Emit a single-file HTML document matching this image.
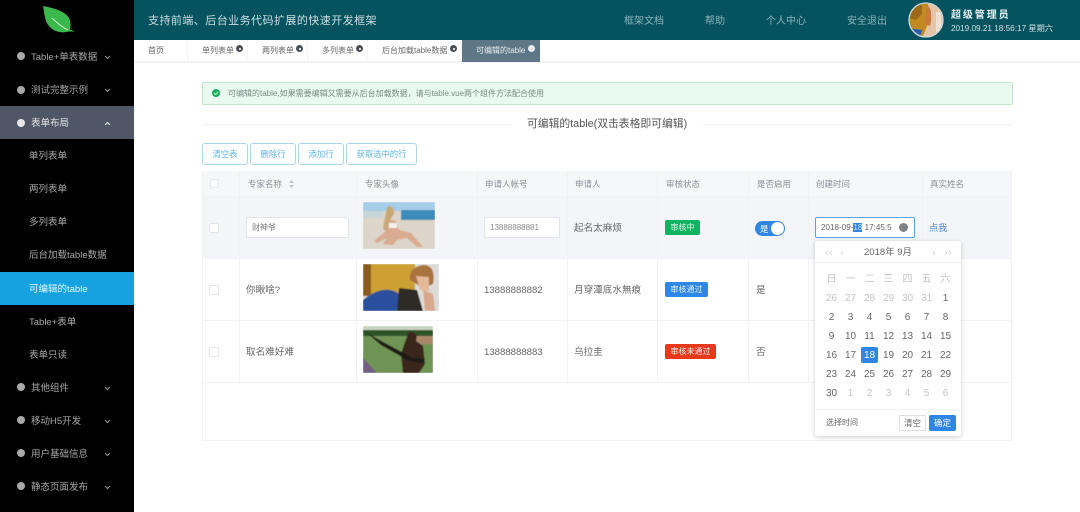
<!DOCTYPE html>
<html><head><meta charset="utf-8">
<style>
html,body{margin:0;padding:0;width:1080px;height:512px;overflow:hidden;background:#fff}
body{position:relative;font-family:"Liberation Sans","Noto Sans CJK SC",sans-serif;font-size:9.5px;color:#5f6368}
.a,.t{position:absolute}
.t{white-space:nowrap;line-height:14px}
.m{position:absolute;left:0;width:134px;height:33px;line-height:36px;color:#a8a8a8;white-space:nowrap}
.m .d{position:absolute;left:17px;top:13px;width:8px;height:8px;border-radius:50%;background:#a9a9a9}
.m .l{position:absolute;left:31px}
.m .s{position:absolute;left:29px}
.m svg{position:absolute;left:104px;top:15px}
.tab{position:absolute;top:40px;height:22px;line-height:22px;color:#666;font-size:8px;white-space:nowrap;border-right:1px solid #f5f5f5;box-sizing:border-box}
.x{position:absolute;width:7px;height:7px;border-radius:50%;background:#4a4f55;top:5px}
.x:after{content:"";position:absolute;left:2.5px;top:2.5px;width:2px;height:2px;background:#ddd}
.btn{position:absolute;top:143px;height:22px;line-height:20px;border:1px solid #a9d8ec;border-radius:3px;box-sizing:border-box;color:#62b6e8;text-align:center;font-size:8.3px;background:#fdfeff}
.hl{position:absolute;background:#f0f2f5}
.h{position:absolute;top:177px;line-height:14px;color:#8a8f96;font-size:8.5px;white-space:nowrap}
.c{position:absolute;line-height:14px;color:#666;font-size:9.6px;white-space:nowrap}
.cb{position:absolute;left:209px;width:10px;height:10px;border:1px solid #e4e6ea;border-radius:2px;background:#fff;box-sizing:border-box}
.in{position:absolute;background:#fff;border:1px solid #e2e5ea;border-radius:2px;box-sizing:border-box;height:21px;line-height:20px;font-size:8px;color:#777;padding-left:5px}
.tag{position:absolute;height:15px;line-height:16px;border-radius:2px;color:#e6f3ee;font-size:8px;text-align:center}
.cal span{position:absolute;width:19px;text-align:center;font-size:10px;line-height:14px;color:#666;margin-top:1px}
.cal span.g{color:#c3c5c9}
</style></head><body>

<!-- sidebar -->
<div class="a" style="left:0;top:0;width:134px;height:512px;background:#000"></div>
<svg class="a" style="left:40px;top:4px" width="38" height="30" viewBox="0 0 38 30">
<path d="M3 2 C13 4 26 7 29.5 15 C31 19 30.5 23 30 25.5 L35 27.5 L28.5 27.5 C20 30 10 27 6 17 C4 11 4 6 3 2Z" fill="#3bb84b"/>
<path d="M12 14 C17 19 22 23 28 26" stroke="#d7f0d4" stroke-width=".9" fill="none"/>
</svg>

<div class="m" style="top:40px"><i class="d" style="top:12px"></i><span class="l">Table+单表数据</span><svg width="7" height="5" viewBox="0 0 7 5"><path d="M1 1l2.5 2.5L6 1" fill="none" stroke="#999" stroke-width="1"/></svg></div>
<div class="m" style="top:73px"><i class="d"></i><span class="l">测试完整示例</span><svg width="7" height="5" viewBox="0 0 7 5"><path d="M1 1l2.5 2.5L6 1" fill="none" stroke="#999" stroke-width="1"/></svg></div>
<div class="m" style="top:106px;background:#4f5666;color:#e4e5e8"><i class="d" style="background:#e8e8e8"></i><span class="l">表单布局</span><svg width="7" height="5" viewBox="0 0 7 5"><path d="M1 4l2.5-2.5L6 4" fill="none" stroke="#e8e8e8" stroke-width="1"/></svg></div>
<div class="m" style="top:139px"><span class="s">单列表单</span></div>
<div class="m" style="top:172px"><span class="s">两列表单</span></div>
<div class="m" style="top:205px"><span class="s">多列表单</span></div>
<div class="m" style="top:238px"><span class="s">后台加载table数据</span></div>
<div class="m" style="top:272px;background:#16a2e0;color:#e8f6fd"><span class="s">可编辑的table</span></div>
<div class="m" style="top:305px"><span class="s">Table+表单</span></div>
<div class="m" style="top:338px"><span class="s">表单只读</span></div>
<div class="m" style="top:371px"><i class="d" style="top:12px"></i><span class="l">其他组件</span><svg width="7" height="5" viewBox="0 0 7 5"><path d="M1 1l2.5 2.5L6 1" fill="none" stroke="#999" stroke-width="1"/></svg></div>
<div class="m" style="top:404px"><i class="d" style="top:12px"></i><span class="l">移动H5开发</span><svg width="7" height="5" viewBox="0 0 7 5"><path d="M1 1l2.5 2.5L6 1" fill="none" stroke="#999" stroke-width="1"/></svg></div>
<div class="m" style="top:437px"><i class="d" style="top:12px"></i><span class="l">用户基础信息</span><svg width="7" height="5" viewBox="0 0 7 5"><path d="M1 1l2.5 2.5L6 1" fill="none" stroke="#999" stroke-width="1"/></svg></div>
<div class="m" style="top:470px"><i class="d" style="top:12px"></i><span class="l">静态页面发布</span><svg width="7" height="5" viewBox="0 0 7 5"><path d="M1 1l2.5 2.5L6 1" fill="none" stroke="#999" stroke-width="1"/></svg></div>

<!-- header -->
<div class="a" style="left:134px;top:0;width:946px;height:40px;background:#04535f"></div>
<div class="t" style="left:148px;top:14px;font-size:11px;letter-spacing:.45px;color:#cfdfe1">支持前端、后台业务代码扩展的快速开发框架</div>
<div class="t" style="left:624px;top:15px;font-size:10px;color:#8fb3b8">框架文档</div>
<div class="t" style="left:705px;top:15px;font-size:10px;color:#8fb3b8">帮助</div>
<div class="t" style="left:766px;top:15px;font-size:10px;color:#8fb3b8">个人中心</div>
<div class="t" style="left:847px;top:15px;font-size:10px;color:#8fb3b8">安全退出</div>
<svg class="a" style="left:908px;top:2px" width="36" height="36" viewBox="0 0 36 36">
<defs><clipPath id="av"><circle cx="18" cy="18" r="16.5"/></clipPath></defs>
<g clip-path="url(#av)"><rect width="36" height="36" fill="#c28a22"/><path d="M0 0H14V12L8 18L0 16Z" fill="#9c6a18"/><path d="M0 26L14 28L12 36L0 36Z" fill="#2a5ea8"/><path d="M20 2L36 2L36 36L14 36L20 22Z" fill="#e6c4a8"/><path d="M19 3C24 6 24 16 22 24L17 22Z" fill="#c9793c"/><path d="M28 10L33 10L34 30L28 30Z" fill="#f0dfd4"/></g>
<circle cx="18" cy="18" r="17" fill="none" stroke="#d5dcdc" stroke-width="1.3"/>
</svg>
<div class="t" style="left:951px;top:9px;font-size:10px;font-weight:bold;letter-spacing:1.9px;color:#e4eeef">超级管理员</div>
<div class="t" style="left:951px;top:22px;font-size:8.2px;color:#cfe0e2">2019.09.21 18:56:17 星期六</div>

<!-- tabs -->
<div class="a" style="left:134px;top:61px;width:946px;height:2px;background:#f2f2f2"></div>
<div class="tab" style="left:134px;width:54px;padding-left:14px">首页</div>
<div class="tab" style="left:188px;width:60px;padding-left:14px">单列表单<i class="x" style="left:48px"></i></div>
<div class="tab" style="left:248px;width:60px;padding-left:14px">两列表单<i class="x" style="left:48px"></i></div>
<div class="tab" style="left:308px;width:60px;padding-left:14px">多列表单<i class="x" style="left:48px"></i></div>
<div class="tab" style="left:368px;width:94px;padding-left:14px">后台加载table数据<i class="x" style="left:82px"></i></div>
<div class="tab" style="left:462px;width:78px;padding-left:14px;background:#5d7787;color:#e8eef1;border:0;height:22px">可编辑的table<i class="x" style="left:66px;background:#e8eef1"></i></div>

<!-- alert -->
<div class="a" style="left:202px;top:82px;width:811px;height:23px;background:#e9fbf0;border:1px solid #bfe8cd;border-radius:2px;box-sizing:border-box"></div>
<svg class="a" style="left:212px;top:89px" width="8" height="8" viewBox="0 0 8 8"><circle cx="4" cy="4" r="4" fill="#1aae5c"/><path d="M2 4l1.5 1.5L6 3" fill="none" stroke="#d8f5e4" stroke-width=".9"/></svg>
<div class="t" style="left:228px;top:87px;font-size:8px;color:#7c8a84">可编辑的table,如果需要编辑又需要从后台加载数据，请与table.vue两个组件方法配合使用</div>

<!-- divider -->
<div class="hl" style="left:202px;top:124px;width:310px;height:1px"></div>
<div class="hl" style="left:703px;top:124px;width:309px;height:1px"></div>
<div class="t" style="left:527px;top:117px;font-size:10.8px;color:#555">可编辑的table(双击表格即可编辑)</div>

<!-- buttons -->
<div class="btn" style="left:202px;width:46px">清空表</div>
<div class="btn" style="left:250px;width:46px">删除行</div>
<div class="btn" style="left:298px;width:46px">添加行</div>
<div class="btn" style="left:346px;width:71px">获取选中的行</div>

<!-- table -->
<div class="a" style="left:202px;top:171px;width:810px;height:25px;background:#f6f7f8"></div>
<div class="a" style="left:202px;top:196px;width:810px;height:62px;background:#f3f5f8"></div>
<div class="a" style="left:202px;top:171px;width:810px;height:270px;border:1px solid #f0f2f5;box-sizing:border-box;border-top:0"></div>
<div class="hl" style="left:202px;top:196px;width:810px;height:1px"></div>
<div class="hl" style="left:202px;top:258px;width:810px;height:1px"></div>
<div class="hl" style="left:202px;top:320px;width:810px;height:1px"></div>
<div class="hl" style="left:202px;top:382px;width:810px;height:1px"></div>
<div class="hl" style="left:239px;top:171px;width:1px;height:211px"></div>
<div class="hl" style="left:356px;top:171px;width:1px;height:211px"></div>
<div class="hl" style="left:477px;top:171px;width:1px;height:211px"></div>
<div class="hl" style="left:567px;top:171px;width:1px;height:211px"></div>
<div class="hl" style="left:657px;top:171px;width:1px;height:211px"></div>
<div class="hl" style="left:748px;top:171px;width:1px;height:211px"></div>
<div class="hl" style="left:808px;top:171px;width:1px;height:211px"></div>
<div class="hl" style="left:922px;top:171px;width:1px;height:211px"></div>

<div class="cb" style="top:179px;left:210px;width:9px;height:9px"></div>
<div class="cb" style="top:223px"></div>
<div class="cb" style="top:285px"></div>
<div class="cb" style="top:347px"></div>

<div class="h" style="left:248px">专家名称</div>
<svg class="a" style="left:288px;top:179px" width="7" height="10" viewBox="0 0 7 10"><path d="M3.5 1L6 4H1ZM3.5 9L1 6H6Z" fill="#c0c4cc"/></svg>
<div class="h" style="left:365px">专家头像</div>
<div class="h" style="left:485px">申请人帐号</div>
<div class="h" style="left:575px">申请人</div>
<div class="h" style="left:666px">审核状态</div>
<div class="h" style="left:757px">是否启用</div>
<div class="h" style="left:816px">创建时间</div>
<div class="h" style="left:930px">真实姓名</div>

<!-- row 1 -->
<div class="in" style="left:246px;top:217px;width:103px">财神爷</div>
<svg class="a" style="left:363px;top:202px" width="72" height="47" viewBox="0 0 72 47">
<defs><filter id="b"><feGaussianBlur stdDeviation=".6"/></filter></defs>
<g filter="url(#b)"><rect width="72" height="47" fill="#dcd5c9"/><rect width="72" height="9" fill="#a6cde8"/><rect y="8" x="38" width="34" height="10" fill="#3a8cba"/><rect y="9" width="20" height="7" fill="#c7d6d8"/>
<path d="M26 17L33 19L36 28L48 31L60 45L54 45L44 36L34 38L30 43L20 42L24 36L14 41L11 39L23 29Z" fill="#d9ab90"/><path d="M24 5C29 2 32 7 31 12L27 18L23 30L20 26Z" fill="#c9a878"/><rect x="26" y="21" width="8" height="5" fill="#f4f1ec"/></g></svg>

<div class="in" style="left:484px;top:217px;width:76px;padding-left:5px;color:#888">13888888881</div>
<div class="c" style="left:574px;top:222px">起名太麻烦</div>
<div class="tag" style="left:665px;top:220px;width:35px;background:#12b461">审核中</div>
<div class="a" style="left:755px;top:221px;width:30px;height:15px;border-radius:8px;background:#2f86e4"></div>
<div class="a" style="left:771px;top:222px;width:13px;height:13px;border-radius:50%;background:#fff"></div>
<div class="t" style="left:760px;top:222px;font-size:8.5px;color:#fff">是</div>

<div class="a" style="left:815px;top:217px;width:100px;height:21px;background:#fff;border:1px solid #5b9fe6;border-radius:2px;box-sizing:border-box"></div>
<div class="t" style="left:821px;top:221px;font-size:8.1px;color:#666">2018-09-<span style="background:#2f86e4;color:#cfe4fa">18</span> 17:45:5</div>
<div class="a" style="left:899px;top:223px;width:9px;height:9px;border-radius:50%;background:#808489"></div>
<div class="c" style="left:929px;top:221px;font-size:9.2px;color:#4a86d6">点我</div>

<!-- row 2 -->
<div class="c" style="left:246px;top:284px">你瞅啥?</div>
<svg class="a" style="left:363px;top:264px" width="76" height="47" viewBox="0 0 76 47">
<g filter="url(#b)"><rect width="76" height="47" fill="#dcdbd7"/><rect width="52" height="32" fill="#cda035"/><path d="M0 0H8V32H0Z" fill="#8a5c1e"/><path d="M0 47V36C12 26 26 22 36 30L34 47Z" fill="#2a4f9c"/><path d="M36 24L54 26L60 47H34Z" fill="#2e2a28"/>
<path d="M47 16C45 6 54 1 62 1C69 2 72 8 70 20L60 24Z" fill="#a9733e"/><path d="M53 12L66 13L66 27L57 26Z" fill="#e6b89a"/><path d="M60 26L70 30L72 47L62 47Z" fill="#d9a88c"/></g></svg>
<div class="c" style="left:484px;top:284px">13888888882</div>
<div class="c" style="left:574px;top:284px">月穿潭底水無痕</div>
<div class="tag" style="left:665px;top:282px;width:43px;background:#2f86e4">审核通过</div>
<div class="c" style="left:756px;top:284px">是</div>

<!-- row 3 -->
<div class="c" style="left:246px;top:346px">取名难好难</div>
<svg class="a" style="left:363px;top:326px" width="70" height="47" viewBox="0 0 70 47">
<g filter="url(#b)"><rect width="70" height="47" fill="#6f9455"/><rect width="70" height="5" fill="#c9d4c0"/><rect y="4" width="70" height="6" fill="#2f5228"/><path d="M0 32L14 47H0Z" fill="#6f5f80"/><path d="M46 10H70V18H54Z" fill="#a88868"/>
<path d="M46 6C52 5 55 9 53 15L60 20L62 38L56 47H40L38 28L42 16Z" fill="#3a281c"/><path d="M4 7L20 16L50 32L62 33L60 37L46 35L18 19Z" fill="#1e1a16"/></g></svg>
<div class="c" style="left:484px;top:346px">13888888883</div>
<div class="c" style="left:574px;top:346px">乌拉圭</div>
<div class="tag" style="left:665px;top:344px;width:51px;background:#e8391a">审核未通过</div>
<div class="c" style="left:756px;top:346px">否</div>

<!-- calendar -->
<div class="a cal" style="left:815px;top:241px;width:146px;height:195px;background:#fff;border-radius:2px;box-shadow:0 1px 5px rgba(0,0,0,.2)">
<div class="hl" style="left:0;top:21px;width:146px;height:1px"></div>
<div class="hl" style="left:0;top:168px;width:146px;height:1px"></div>
<div class="t" style="left:49px;top:5px;font-size:9.5px;color:#666">2018年 9月</div>
<svg class="a" style="left:9px;top:8px" width="130" height="8" viewBox="0 0 130 8"><g fill="none" stroke="#cfd2d8" stroke-width=".8"><path d="M4 2L2 4l2 2M8 2L6 4l2 2M19 2L17 4l2 2M109 2l2 2-2 2M121 2l2 2-2 2M125 2l2 2-2 2"/></g></svg>

<span class="g" style="left:7px;top:31px">日</span><span class="g" style="left:26px;top:31px">一</span><span class="g" style="left:45px;top:31px">二</span><span class="g" style="left:64px;top:31px">三</span><span class="g" style="left:83px;top:31px">四</span><span class="g" style="left:102px;top:31px">五</span><span class="g" style="left:121px;top:31px">六</span>

<span class="g" style="left:7px;top:50px">26</span><span class="g" style="left:26px;top:50px">27</span><span class="g" style="left:45px;top:50px">28</span><span class="g" style="left:64px;top:50px">29</span><span class="g" style="left:83px;top:50px">30</span><span class="g" style="left:102px;top:50px">31</span><span style="left:121px;top:50px">1</span>

<span style="left:7px;top:69px">2</span><span style="left:26px;top:69px">3</span><span style="left:45px;top:69px">4</span><span style="left:64px;top:69px">5</span><span style="left:83px;top:69px">6</span><span style="left:102px;top:69px">7</span><span style="left:121px;top:69px">8</span>

<span style="left:7px;top:88px">9</span><span style="left:26px;top:88px">10</span><span style="left:45px;top:88px">11</span><span style="left:64px;top:88px">12</span><span style="left:83px;top:88px">13</span><span style="left:102px;top:88px">14</span><span style="left:121px;top:88px">15</span>

<span style="left:7px;top:107px">16</span><span style="left:26px;top:107px">17</span><div class="a" style="left:46px;top:106px;width:17px;height:16px;background:#2f86e4;border-radius:2px"></div><span style="left:45px;top:107px;color:#fff">18</span><span style="left:64px;top:107px">19</span><span style="left:83px;top:107px">20</span><span style="left:102px;top:107px">21</span><span style="left:121px;top:107px">22</span>

<span style="left:7px;top:126px">23</span><span style="left:26px;top:126px">24</span><span style="left:45px;top:126px">25</span><span style="left:64px;top:126px">26</span><span style="left:83px;top:126px">27</span><span style="left:102px;top:126px">28</span><span style="left:121px;top:126px">29</span>

<span style="left:7px;top:145px">30</span><span class="g" style="left:26px;top:145px">1</span><span class="g" style="left:45px;top:145px">2</span><span class="g" style="left:64px;top:145px">3</span><span class="g" style="left:83px;top:145px">4</span><span class="g" style="left:102px;top:145px">5</span><span class="g" style="left:121px;top:145px">6</span>

<div class="t" style="left:11px;top:175px;font-size:8px;color:#666">选择时间</div>
<div class="a" style="left:84px;top:174px;width:27px;height:16px;border:1px solid #dcdfe6;box-sizing:border-box;text-align:center;line-height:14px;font-size:8.5px;color:#666;border-radius:1px">清空</div>
<div class="a" style="left:114px;top:174px;width:27px;height:16px;background:#2f86e4;text-align:center;line-height:16px;font-size:8.5px;color:#fff;border-radius:2px">确定</div>
</div>

</body></html>
